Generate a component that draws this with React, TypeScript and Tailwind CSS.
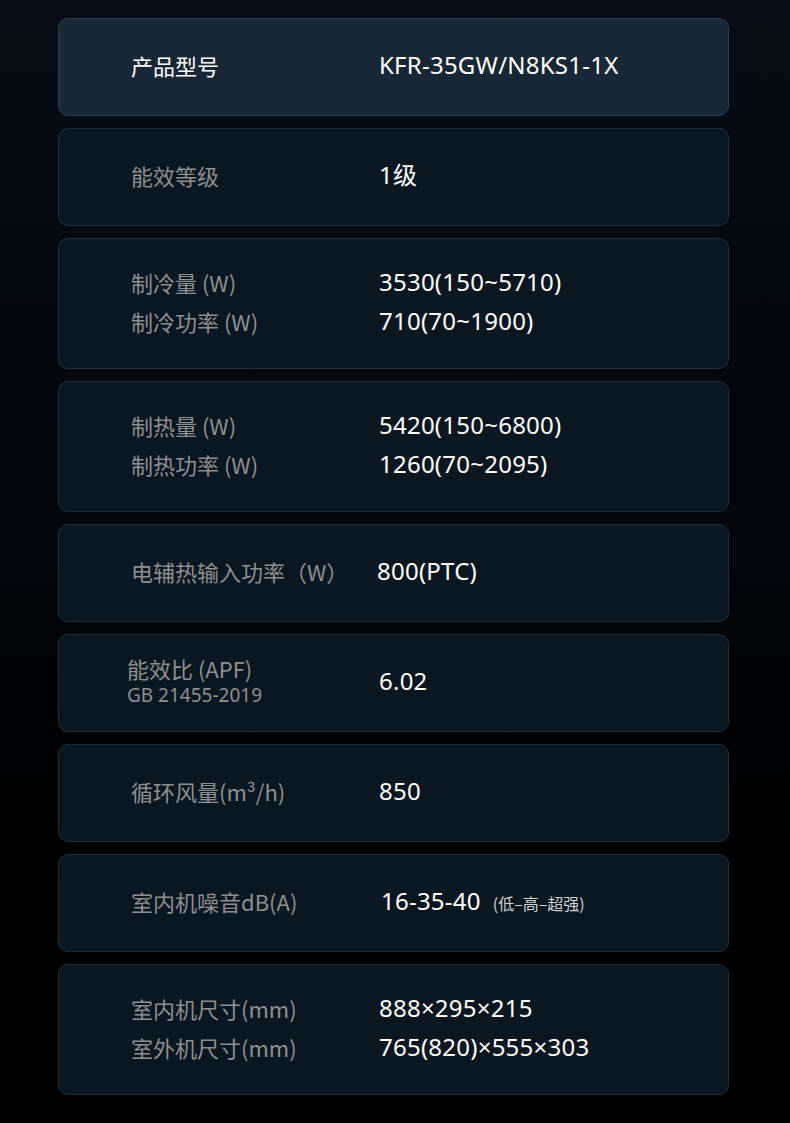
import React from "react";

type Row = { label: React.ReactNode; value: React.ReactNode };

const font = { fontFamily: '"Noto Sans CJK SC", "Noto Sans", sans-serif' };
const vfont = { fontFamily: '"Noto Sans", "Noto Sans CJK SC", sans-serif' };

function Value({ children, className = "" }: { children: React.ReactNode; className?: string }) {
  return (
    <div className={"text-[24px] text-white tracking-[0.01em] " + className} style={vfont}>
      {children}
    </div>
  );
}

function SingleCard({ label, value, highlight }: { label: React.ReactNode; value: React.ReactNode; highlight?: boolean }) {
  return (
    <div
      className={
        "h-[98px] rounded-[10px] border flex items-center pl-[72px] pb-[4px] " +
        (highlight ? "bg-[#172735] border-[#2c3f50]" : "bg-[#0a1720] border-[#1e2f3d]")
      }
    >
      <div className={"w-[248px] shrink-0 text-[22px] " + (highlight ? "text-white" : "text-[#8d8f91]")}>{label}</div>
      <Value>{value}</Value>
    </div>
  );
}

function DoubleCard({ rows }: { rows: Row[] }) {
  return (
    <div className="h-[131px] rounded-[10px] border bg-[#0a1720] border-[#1e2f3d] flex flex-col justify-center gap-[9px] pl-[72px] pb-[4px]">
      {rows.map((r, i) => (
        <div key={i} className="flex items-center h-[30px]">
          <div className="w-[248px] shrink-0 text-[22px] text-[#8d8f91]">{r.label}</div>
          <Value>{r.value}</Value>
        </div>
      ))}
    </div>
  );
}

export default function App() {
  return (
    <div
      className="w-[790px] h-[1123px] bg-gradient-to-b from-[#070c14] via-[#03060a] to-[#000000] pt-[18px] pl-[58px] leading-none"
      style={font}
    >
      <div className="w-[671px] flex flex-col gap-[12px]">
        <SingleCard highlight label="产品型号" value="KFR-35GW/N8KS1-1X" />
        <SingleCard label="能效等级" value="1级" />
        <DoubleCard
          rows={[
            { label: "制冷量 (W)", value: "3530(150~5710)" },
            { label: "制冷功率 (W)", value: "710(70~1900)" },
          ]}
        />
        <DoubleCard
          rows={[
            { label: "制热量 (W)", value: "5420(150~6800)" },
            { label: "制热功率 (W)", value: "1260(70~2095)" },
          ]}
        />
        <SingleCard label="电辅热输入功率（W）" value={<span className="-ml-[2px]">800(PTC)</span>} />
        <div className="h-[98px] rounded-[10px] border bg-[#0a1720] border-[#1e2f3d] flex items-center pl-[68px] pb-[4px]">
          <div className="w-[252px] shrink-0 flex flex-col gap-[7px] text-[#8d8f91]">
            <div className="text-[22px]">能效比 (APF)</div>
            <div className="text-[19px]" style={vfont}>GB 21455-2019</div>
          </div>
          <Value>6.02</Value>
        </div>
        <SingleCard label="循环风量(m³/h)" value="850" />
        <SingleCard
          label="室内机噪音dB(A)"
          value={
            <span className="flex items-baseline">
              <span className="ml-[2px]">16-35-40</span>
              <span className="ml-[12px] text-[16px] tracking-normal text-[#d0d2d4]" style={font}>(低–高–超强)</span>
            </span>
          }
        />
        <DoubleCard
          rows={[
            { label: "室内机尺寸(mm)", value: "888×295×215" },
            { label: "室外机尺寸(mm)", value: "765(820)×555×303" },
          ]}
        />
      </div>
    </div>
  );
}
